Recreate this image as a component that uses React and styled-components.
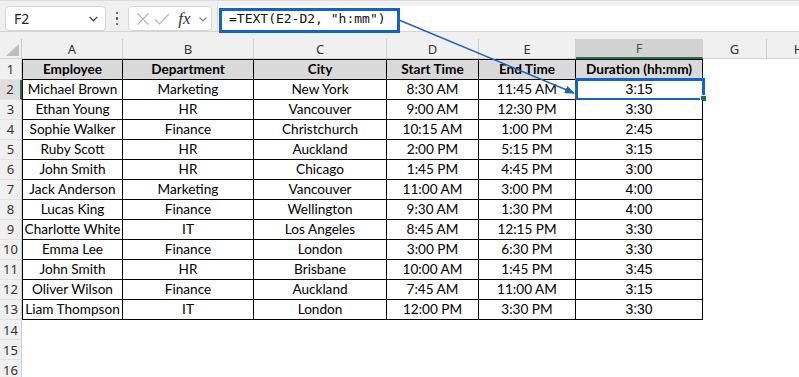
import React from "react";
import styled, { createGlobalStyle } from "styled-components";

const GlobalStyle = createGlobalStyle`
  html, body { margin: 0; padding: 0; background: #ffffff; overflow: hidden; }
  #root { width: 799px; height: 377px; }
`;

const COLS = "22px 101px 131px 133px 92px 97px 127px 64px 64px";
const UI_FONT = `"Segoe UI", "Noto Sans", "Open Sans", sans-serif`;
const CELL_FONT = `Lato, "Liberation Sans", sans-serif`;

const Page = styled.div`
  position: relative;
  width: 799px;
  height: 377px;
  overflow: hidden;
  background: #ffffff;
`;

const Toolbar = styled.div`
  display: flex;
  align-items: flex-start;
  height: 32px;
  box-sizing: border-box;
  padding: 6px 0 0 5px;
  background: #f0f0f0;
  border-top: 1px solid #dcdcdc;
  border-bottom: 1px solid #d4d4d4;
`;

const NameBox = styled.div`
  width: 101px;
  height: 25px;
  margin-top: -1px;
  box-sizing: border-box;
  display: flex;
  align-items: center;
  justify-content: space-between;
  padding: 0 6px 0 8px;
  background: #ffffff;
  border: 1px solid #d6d6d6;
  border-radius: 4px;
  font-family: ${UI_FONT};
  font-size: 14px;
  color: #222;
`;

const Dots = styled.div`
  width: 22px;
  height: 25px;
  display: flex;
  flex-direction: column;
  align-items: center;
  justify-content: center;
  gap: 3px;
  margin-top: -1px;
  span {
    width: 2.5px;
    height: 2.5px;
    border-radius: 50%;
    background: #444;
  }
`;

const FxBox = styled.div`
  width: 84px;
  height: 25px;
  margin-top: -1px;
  box-sizing: border-box;
  display: flex;
  align-items: center;
  padding: 0 2px 0 5px;
  background: #ffffff;
  border: 1px solid #d6d6d6;
  border-radius: 4px;
`;

const FxIcon = styled.span`
  display: inline-flex;
  align-items: center;
  justify-content: center;
  width: ${(p) => p.$w}px;
  height: 23px;
`;

const FxText = styled.span`
  font-family: "Liberation Serif", "DejaVu Serif", serif;
  font-style: italic;
  font-size: 17px;
  color: #333;
  width: 20px;
  margin-left: 6px;
  line-height: 23px;
`;

const FormulaBar = styled.div`
  position: relative;
  flex: 1;
  height: 25px;
  margin-top: -1px;
  margin-left: 5px;
  box-sizing: border-box;
  background: #ffffff;
  border-left: 1px solid #d6d6d6;
  display: flex;
  align-items: center;
  padding-left: 11px;
  font-family: "DejaVu Sans Mono", "Liberation Mono", monospace;
  font-size: 13px;
  color: #111;
`;

const Highlight = styled.div`
  position: absolute;
  left: 1px;
  top: 2px;
  width: 181px;
  height: 25px;
  box-sizing: border-box;
  border: 3px solid #0f64cc;
  pointer-events: none;
`;

const HeaderBand = styled.div`
  display: grid;
  grid-template-columns: ${COLS};
  padding-top: 7px;
  background: #f0f0f0;
`;

const CornerCell = styled.div`
  position: relative;
  height: 20px;
  box-sizing: border-box;
  border-right: 1px solid #cfcfcf;
  border-bottom: 1px solid #d4d4d4;
  svg { position: absolute; right: 2px; bottom: 2px; }
`;

const ColHead = styled.div`
  height: 20px;
  box-sizing: border-box;
  display: flex;
  align-items: center;
  justify-content: center;
  font-family: ${UI_FONT};
  font-size: 13px;
  color: ${(p) => (p.$active ? "#1d6b40" : "#333")};
  background: ${(p) => (p.$active ? "#d3d3d3" : "#f0f0f0")};
  border-right: 1px solid #cfcfcf;
  border-bottom: ${(p) => (p.$active ? "2px solid #1e7145" : "1px solid #d4d4d4")};
`;

const Row = styled.div`
  display: grid;
  grid-template-columns: ${COLS};
  height: ${(p) => (p.$first ? 21 : 20)}px;
`;

const RowHead = styled.div`
  box-sizing: border-box;
  display: flex;
  align-items: center;
  justify-content: center;
  font-family: ${UI_FONT};
  font-size: 13px;
  color: #333;
  background: ${(p) => (p.$active ? "#dedede" : "#f0f0f0")};
  border-right: ${(p) => (p.$active ? "2px solid #1e7145" : "1px solid #cfcfcf")};
  border-bottom: 1px solid #e2e2e2;
  padding-top: ${(p) => (p.$first ? 1 : 0)}px;
`;

const Cell = styled.div`
  position: relative;
  box-sizing: border-box;
  display: flex;
  align-items: center;
  justify-content: center;
  white-space: nowrap;
  font-family: ${(p) => (p.$arial ? `"Liberation Sans", Arial, sans-serif` : CELL_FONT)};
  font-size: ${(p) => (p.$arial ? 14 : 13.6)}px;
  font-weight: ${(p) => (p.$bold ? 700 : 400)};
  color: #000;
  background: ${(p) => (p.$bold ? "#d9d9d9" : "#ffffff")};
  border-right: 1px solid #000;
  border-bottom: 1px solid #000;
  border-top: ${(p) => (p.$first ? "1px solid #000" : "none")};
  border-left: ${(p) => (p.$left ? "1px solid #000" : "none")};
`;

const Empty = styled.div`
  background: #ffffff;
`;

const Selection = styled.div`
  position: absolute;
  left: -1px;
  top: -2px;
  right: -3px;
  bottom: -2px;
  border: 3px solid #0f64cc;
  pointer-events: none;
`;

const FillHandle = styled.div`
  position: absolute;
  right: -5px;
  bottom: -4px;
  width: 5px;
  height: 5px;
  background: #1e7145;
  border: 1px solid #ffffff;
`;

const ArrowLayer = styled.svg`
  position: absolute;
  left: 0;
  top: 0;
  pointer-events: none;
`;

const columns = ["A", "B", "C", "D", "E", "F", "G", "H"];

const header = ["Employee", "Department", "City", "Start Time", "End Time", "Duration (hh:mm)"];

const data = [
  ["Michael Brown", "Marketing", "New York", "8:30 AM", "11:45 AM", "3:15"],
  ["Ethan Young", "HR", "Vancouver", "9:00 AM", "12:30 PM", "3:30"],
  ["Sophie Walker", "Finance", "Christchurch", "10:15 AM", "1:00 PM", "2:45"],
  ["Ruby Scott", "HR", "Auckland", "2:00 PM", "5:15 PM", "3:15"],
  ["John Smith", "HR", "Chicago", "1:45 PM", "4:45 PM", "3:00"],
  ["Jack Anderson", "Marketing", "Vancouver", "11:00 AM", "3:00 PM", "4:00"],
  ["Lucas King", "Finance", "Wellington", "9:30 AM", "1:30 PM", "4:00"],
  ["Charlotte White", "IT", "Los Angeles", "8:45 AM", "12:15 PM", "3:30"],
  ["Emma Lee", "Finance", "London", "3:00 PM", "6:30 PM", "3:30"],
  ["John Smith", "HR", "Brisbane", "10:00 AM", "1:45 PM", "3:45"],
  ["Oliver Wilson", "Finance", "Auckland", "7:45 AM", "11:00 AM", "3:15"],
  ["Liam Thompson", "IT", "London", "12:00 PM", "3:30 PM", "3:30"],
];

const Chevron = ({ color = "#555", size = 10 }) => (
  <svg width={size} height={size} viewBox="0 0 10 10">
    <path d="M1.5 3.5 L5 7 L8.5 3.5" fill="none" stroke={color} strokeWidth="1.2" />
  </svg>
);

export default function App() {
  return (
    <Page>
      <GlobalStyle />
      <Toolbar>
        <NameBox>
          <span>F2</span>
          <Chevron color="#444" size={11} />
        </NameBox>
        <Dots>
          <span />
          <span />
          <span />
        </Dots>
        <FxBox>
          <FxIcon $w={18}>
            <svg width="14" height="14" viewBox="0 0 14 14">
              <path d="M1.5 1.5 L12.5 12.5 M12.5 1.5 L1.5 12.5" stroke="#b4b4b4" strokeWidth="1.1" fill="none" />
            </svg>
          </FxIcon>
          <FxIcon $w={22}>
            <svg width="16" height="14" viewBox="0 0 16 14">
              <path d="M1 7.5 L5.5 12 L15 2" stroke="#b4b4b4" strokeWidth="1.1" fill="none" />
            </svg>
          </FxIcon>
          <FxText>fx</FxText>
          <FxIcon $w={12}>
            <Chevron color="#888" size={10} />
          </FxIcon>
        </FxBox>
        <FormulaBar>
          <span>=TEXT(E2-D2, "h:mm")</span>
          <Highlight />
        </FormulaBar>
      </Toolbar>

      <HeaderBand>
        <CornerCell>
          <svg width="13" height="12" viewBox="0 0 13 12">
            <polygon points="13,0 13,12 0,12" fill="#bdbdbd" />
          </svg>
        </CornerCell>
        {columns.map((c) => (
          <ColHead key={c} $active={c === "F"}>
            {c}
          </ColHead>
        ))}
      </HeaderBand>

      <Row $first>
        <RowHead $first>1</RowHead>
        {header.map((h, i) => (
          <Cell key={h} $bold $first $left={i === 0}>
            {h}
          </Cell>
        ))}
        <Empty />
        <Empty />
        <Empty />
      </Row>
      {data.map((r, ri) => (
        <Row key={ri}>
          <RowHead $active={ri === 0}>{ri + 2}</RowHead>
          {r.map((v, i) => (
            <Cell key={i} $left={i === 0} $arial={i === 5}>
              {v}
              {ri === 0 && i === 5 && (
                <Selection>
                  <FillHandle />
                </Selection>
              )}
            </Cell>
          ))}
          <Empty />
          <Empty />
          <Empty />
        </Row>
      ))}
      {[14, 15, 16].map((n) => (
        <Row key={n}>
          <RowHead>{n}</RowHead>
        </Row>
      ))}

      <ArrowLayer width="799" height="377" viewBox="0 0 799 377">
        <defs>
          <marker id="ah" markerWidth="10" markerHeight="8" refX="9" refY="4" orient="auto" markerUnits="userSpaceOnUse">
            <polygon points="0,0 10,4 0,8" fill="#1c62c4" />
          </marker>
        </defs>
        <line x1="399" y1="20" x2="574" y2="93" stroke="#1c62c4" strokeWidth="1.5" markerEnd="url(#ah)" />
      </ArrowLayer>
    </Page>
  );
}
